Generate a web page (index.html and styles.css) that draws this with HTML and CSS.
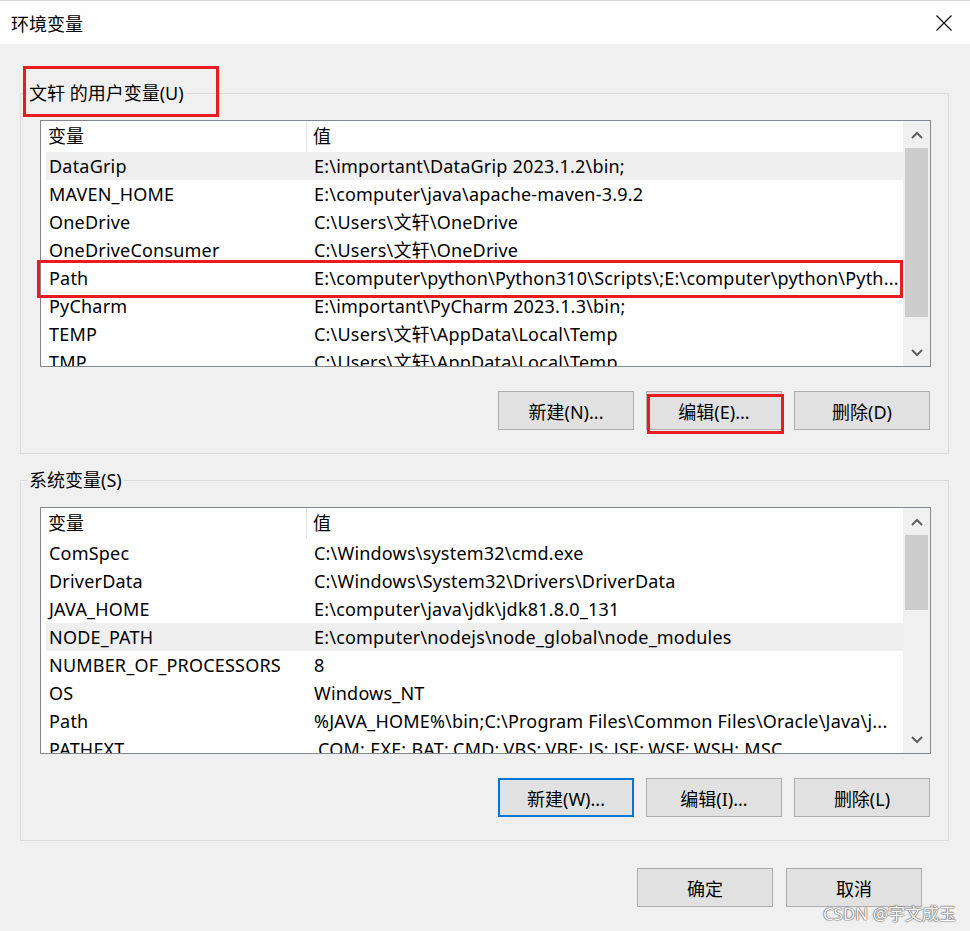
FILE: index.html
```html
<!DOCTYPE html>
<html lang="zh-CN">
<head>
  <meta charset="UTF-8">
  <meta name="viewport" content="width=device-width, initial-scale=1.0">
  <title>环境变量</title>
  <link rel="stylesheet" href="styles.css">
</head>
<body>
  <div class="dialog">
    <!-- Title bar -->
    <div class="titlebar">
      <span class="title">环境变量</span>
      <svg class="close" width="16" height="16" viewBox="0 0 16 16">
        <path d="M0.5 0.5 L15.5 15.5 M15.5 0.5 L0.5 15.5" stroke="#000" stroke-width="1.1" fill="none"/>
      </svg>
    </div>

    <!-- User variables -->
    <fieldset class="group group-user">
      <legend>文轩 的用户变量(U)</legend>
      <div class="var-list">
        <div class="var-main">
          <div class="var-header"><span class="col-name">变量</span><span class="col-value">值</span></div>
          <div class="var-rows">
            <div class="var-row hover"><span>DataGrip</span><span>E:\important\DataGrip 2023.1.2\bin;</span></div>
            <div class="var-row"><span>MAVEN_HOME</span><span>E:\computer\java\apache-maven-3.9.2</span></div>
            <div class="var-row"><span>OneDrive</span><span>C:\Users\文轩\OneDrive</span></div>
            <div class="var-row"><span>OneDriveConsumer</span><span>C:\Users\文轩\OneDrive</span></div>
            <div class="var-row"><span>Path</span><span>E:\computer\python\Python310\Scripts\;E:\computer\python\Pyth...</span></div>
            <div class="var-row"><span>PyCharm</span><span>E:\important\PyCharm 2023.1.3\bin;</span></div>
            <div class="var-row"><span>TEMP</span><span>C:\Users\文轩\AppData\Local\Temp</span></div>
            <div class="var-row"><span>TMP</span><span>C:\Users\文轩\AppData\Local\Temp</span></div>
          </div>
        </div>
        <div class="scrollbar">
          <span class="arrow"><svg width="12" height="8" viewBox="0 0 12 8"><polyline points="1,7 6,2 11,7" fill="none" stroke="#606060" stroke-width="2"/></svg></span>
          <div class="track"><div class="thumb thumb-user"></div></div>
          <span class="arrow"><svg width="12" height="8" viewBox="0 0 12 8"><polyline points="1,1 6,6 11,1" fill="none" stroke="#606060" stroke-width="2"/></svg></span>
        </div>
      </div>
      <div class="btn-row">
        <button class="btn">新建(N)...</button>
        <button class="btn">编辑(E)...</button>
        <button class="btn">删除(D)</button>
      </div>
    </fieldset>

    <!-- System variables -->
    <fieldset class="group group-system">
      <legend>系统变量(S)</legend>
      <div class="var-list">
        <div class="var-main">
          <div class="var-header"><span class="col-name">变量</span><span class="col-value">值</span></div>
          <div class="var-rows">
            <div class="var-row"><span>ComSpec</span><span>C:\Windows\system32\cmd.exe</span></div>
            <div class="var-row"><span>DriverData</span><span>C:\Windows\System32\Drivers\DriverData</span></div>
            <div class="var-row"><span>JAVA_HOME</span><span>E:\computer\java\jdk\jdk81.8.0_131</span></div>
            <div class="var-row hover"><span>NODE_PATH</span><span>E:\computer\nodejs\node_global\node_modules</span></div>
            <div class="var-row"><span>NUMBER_OF_PROCESSORS</span><span>8</span></div>
            <div class="var-row"><span>OS</span><span>Windows_NT</span></div>
            <div class="var-row"><span>Path</span><span>%JAVA_HOME%\bin;C:\Program Files\Common Files\Oracle\Java\j...</span></div>
            <div class="var-row"><span>PATHEXT</span><span>.COM;.EXE;.BAT;.CMD;.VBS;.VBE;.JS;.JSE;.WSF;.WSH;.MSC</span></div>
          </div>
        </div>
        <div class="scrollbar">
          <span class="arrow"><svg width="12" height="8" viewBox="0 0 12 8"><polyline points="1,7 6,2 11,7" fill="none" stroke="#606060" stroke-width="2"/></svg></span>
          <div class="track"><div class="thumb thumb-system"></div></div>
          <span class="arrow"><svg width="12" height="8" viewBox="0 0 12 8"><polyline points="1,1 6,6 11,1" fill="none" stroke="#606060" stroke-width="2"/></svg></span>
        </div>
      </div>
      <div class="btn-row">
        <button class="btn btn-focus">新建(W)...</button>
        <button class="btn">编辑(I)...</button>
        <button class="btn">删除(L)</button>
      </div>
    </fieldset>

    <div class="dialog-buttons">
      <button class="btn">确定</button>
      <button class="btn">取消</button>
    </div>
  </div>

  <!-- Red annotation boxes drawn over the dialog -->
  <div class="mark mark-legend"></div>
  <div class="mark mark-path"></div>
  <div class="mark mark-edit"></div>

  <div class="watermark">CSDN @宇文成玉</div>
</body>
</html>
```

FILE: styles.css
```css
body {
  margin: 0;
  width: 970px;
  height: 931px;
  overflow: hidden;
  position: relative;
  background-color: #f0f0f0;
  font-family: "Noto Sans", "Noto Sans CJK SC", sans-serif;
  font-size: 18px;
  color: #000;
}

.dialog {
  width: 970px;
}

.titlebar {
  height: 44px;
  box-sizing: border-box;
  display: flex;
  align-items: center;
  justify-content: space-between;
  padding: 0 18px 0 11px;
  background-color: #fff;
  border-top: 1px solid #d4d4d4;
}

.title {
  font-size: 18px;
}

.group {
  width: 929px;
  min-width: 0;
  box-sizing: border-box;
  margin: 0 0 0 20px;
  padding: 0 17px 23px 19px;
  border: 1px solid #dcdcdc;
}

.group-user {
  margin-top: 36px;
}

.group-system {
  margin-top: 13px;
}

.group legend {
  line-height: 26px;
  padding: 0 2px;
  margin-left: -13px;
}

.var-list {
  margin-top: 14px;
  height: 247px;
  box-sizing: border-box;
  border: 1px solid #828790;
  background-color: #fff;
  display: flex;
}

.var-main {
  flex: 1;
  min-width: 0;
  display: flex;
  flex-direction: column;
  overflow: hidden;
}

.var-header {
  height: 31px;
  flex-shrink: 0;
  display: grid;
  grid-template-columns: 266px 1fr;
  line-height: 31px;
}

.var-header .col-name {
  padding-left: 7px;
  border-right: 1px solid #e5e5e5;
}

.var-header .col-value {
  padding-left: 6px;
}

.var-rows {
  overflow: hidden;
}

.var-row {
  height: 28px;
  margin-left: 5px;
  display: grid;
  grid-template-columns: 268px 1fr;
  line-height: 28px;
  white-space: nowrap;
  letter-spacing: 0.2px;
}

.var-row span:first-child {
  padding-left: 3px;
}

.var-row span {
  overflow: hidden;
  text-overflow: ellipsis;
}

.var-row.hover {
  background-color: #efefef;
}

.scrollbar {
  width: 27px;
  flex-shrink: 0;
  display: flex;
  flex-direction: column;
  background-color: #f0f0f0;
}

.scrollbar .arrow {
  height: 27px;
  flex-shrink: 0;
  display: flex;
  align-items: center;
  justify-content: center;
}

.scrollbar .track {
  flex: 1;
  padding: 0 2px;
}

.thumb {
  background-color: #cdcdcd;
}

.thumb-user {
  height: 169px;
}

.thumb-system {
  height: 75px;
}

.btn-row {
  display: flex;
  justify-content: flex-end;
  gap: 12px;
  margin-top: 24px;
  padding-right: 1px;
}

.btn {
  width: 136px;
  height: 39px;
  box-sizing: border-box;
  background-color: #e1e1e1;
  border: 1px solid #adadad;
  font-family: inherit;
  font-size: 18px;
  color: #000;
  padding: 0;
}

.btn-focus {
  border: 2px solid #0078d7;
}

.dialog-buttons {
  display: flex;
  justify-content: flex-end;
  gap: 13px;
  margin-top: 27px;
  padding-right: 48px;
}

.mark {
  position: absolute;
  box-sizing: border-box;
  border: 3px solid #e81b23;
}

.mark-legend {
  left: 23px;
  top: 66px;
  width: 196px;
  height: 51px;
}

.mark-path {
  left: 37px;
  top: 260px;
  width: 866px;
  height: 38px;
}

.mark-edit {
  left: 647px;
  top: 394px;
  width: 137px;
  height: 40px;
}

.watermark {
  position: absolute;
  right: 14px;
  top: 900px;
  font-size: 17px;
  color: #fff;
  text-shadow: 0 0 1px #555, 0 0 1px #555, 0 0 2px #888;
}
```
